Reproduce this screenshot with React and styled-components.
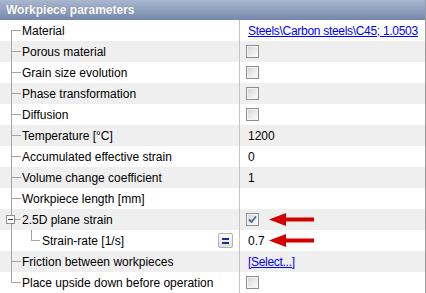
import React from "react";
import styled, { createGlobalStyle } from "styled-components";

const Global = createGlobalStyle`
  html, body { margin: 0; padding: 0; background: #fff; overflow: hidden; }
  body { font-family: "Liberation Sans", Arial, sans-serif; }
`;

const Panel = styled.div`
  width: 425px;
  height: 293px;
  border-right: 1px solid #9a9a9a;
  background: #fff;
  display: flex;
  flex-direction: column;
  overflow: hidden;
`;

const Header = styled.div`
  height: 20px;
  flex: none;
  display: flex;
  align-items: center;
  padding-left: 6px;
  background: linear-gradient(#aab7cf, #7587ab);
  color: #fff;
  font-weight: bold;
  font-size: 12px;
  text-shadow: 0 0 1px rgba(60, 70, 100, 0.4);
`;

const Row = styled.div`
  height: 21px;
  flex: none;
  display: grid;
  grid-template-columns: 240px 1fr;
  background: ${(p) => (p.$shaded ? "#efefef" : "#fff")};
  font-size: 12px;
  color: #000;
  white-space: nowrap;
`;

const LabelCell = styled.div`
  position: relative;
  border-right: 1px solid #c4c4c4;
  display: flex;
  align-items: center;
  padding-left: ${(p) => p.$indent}px;
  padding-right: 6px;
`;

const LabelText = styled.span`
  flex: 1;
  padding-top: 1px;
`;

const ValueCell = styled.div`
  position: relative;
  display: flex;
  align-items: center;
  padding-left: 8px;
  padding-top: 1px;
`;

const VLine = styled.span`
  position: absolute;
  left: ${(p) => p.$x}px;
  top: ${(p) => (p.$fromCenter ? "10px" : "0")};
  ${(p) => (p.$toCenter ? "height: 11px;" : "bottom: 0;")}
  width: 1px;
  background: #a3a3a3;
`;

const HLine = styled.span`
  position: absolute;
  left: ${(p) => p.$x}px;
  top: 10px;
  width: ${(p) => p.$w}px;
  height: 1px;
  background: #a3a3a3;
`;

const Expander = styled.span`
  position: absolute;
  left: 6px;
  top: 6px;
  width: 9px;
  height: 9px;
  box-sizing: border-box;
  border: 1px solid #8f8f8f;
  background: #fff;
  &::after {
    content: "";
    position: absolute;
    left: 1px;
    top: 3px;
    width: 5px;
    height: 1px;
    background: #3a3a3a;
  }
`;

const EditButton = styled.span`
  flex: none;
  width: 15px;
  height: 15px;
  box-sizing: border-box;
  border: 1px solid #b3b3b3;
  border-radius: 2px;
  background: linear-gradient(#ffffff, #dedede);
  display: flex;
  flex-direction: column;
  align-items: center;
  justify-content: center;
  gap: 2px;
  &::before,
  &::after {
    content: "";
    width: 7px;
    height: 2px;
    background: #1d2f8c;
  }
`;

const Link = styled.a`
  color: #0000ff;
  text-decoration: underline;
  letter-spacing: -0.3px;
  cursor: pointer;
`;

const Check = styled.span`
  width: 13px;
  height: 13px;
  box-sizing: border-box;
  margin-left: -2px;
  margin-top: -1px;
  border: 1px solid #8e8f8f;
  background: linear-gradient(135deg, #d4d4d4 0%, #f2f2f2 70%, #ffffff 100%);
  box-shadow: inset 0 0 0 1px #f4f4f4;
  display: flex;
  align-items: center;
  justify-content: center;
`;

const Arrow = styled.svg`
  position: absolute;
  left: 29px;
  top: 3px;
`;

const RedArrow = () => (
  <Arrow width="46" height="15" viewBox="0 0 46 15">
    <polygon points="0,7.5 17,1 17,14" fill="#d20000" />
    <rect x="15" y="5.5" width="30" height="4" fill="#d20000" />
  </Arrow>
);

const CheckBox = ({ checked }) => (
  <Check>
    {checked && (
      <svg width="9" height="9" viewBox="0 0 9 9">
        <path d="M1 4.5 L3.5 7 L8 1.5" stroke="#4b5f98" strokeWidth="1.8" fill="none" />
      </svg>
    )}
  </Check>
);

const rows = [
  { label: "Material", link: "Steels\\Carbon steels\\C45; 1.0503" },
  { label: "Porous material", check: true },
  { label: "Grain size evolution", check: true },
  { label: "Phase transformation", check: true },
  { label: "Diffusion", check: true },
  { label: "Temperature [°C]", text: "1200" },
  { label: "Accumulated effective strain", text: "0" },
  { label: "Volume change coefficient", text: "1" },
  { label: "Workpiece length [mm]", text: "" },
  { label: "2.5D plane strain", check: true, checked: true, expander: true, arrow: true },
  { label: "Strain-rate [1/s]", text: "0.7", child: true, button: true, arrow: true },
  { label: "Friction between workpieces", link: "[Select...]" },
  { label: "Place upside down before operation", check: true, last: true },
];

export default function App() {
  return (
    <>
      <Global />
      <Panel>
        <Header>Workpiece parameters</Header>
        {rows.map((r, i) => (
          <Row key={r.label} $shaded={i % 2 === 1}>
            <LabelCell $indent={r.child ? 42 : 22}>
              <VLine $x={11} $fromCenter={i === 0} $toCenter={r.last} />
              {r.child ? (
                <>
                  <VLine $x={31} $toCenter />
                  <HLine $x={31} $w={9} />
                </>
              ) : (
                <HLine $x={11} $w={10} />
              )}
              {r.expander && <Expander />}
              <LabelText>{r.label}</LabelText>
              {r.button && <EditButton />}
            </LabelCell>
            <ValueCell>
              {r.link && <Link>{r.link}</Link>}
              {r.check && <CheckBox checked={r.checked} />}
              {r.text}
              {r.arrow && <RedArrow />}
            </ValueCell>
          </Row>
        ))}
      </Panel>
    </>
  );
}
